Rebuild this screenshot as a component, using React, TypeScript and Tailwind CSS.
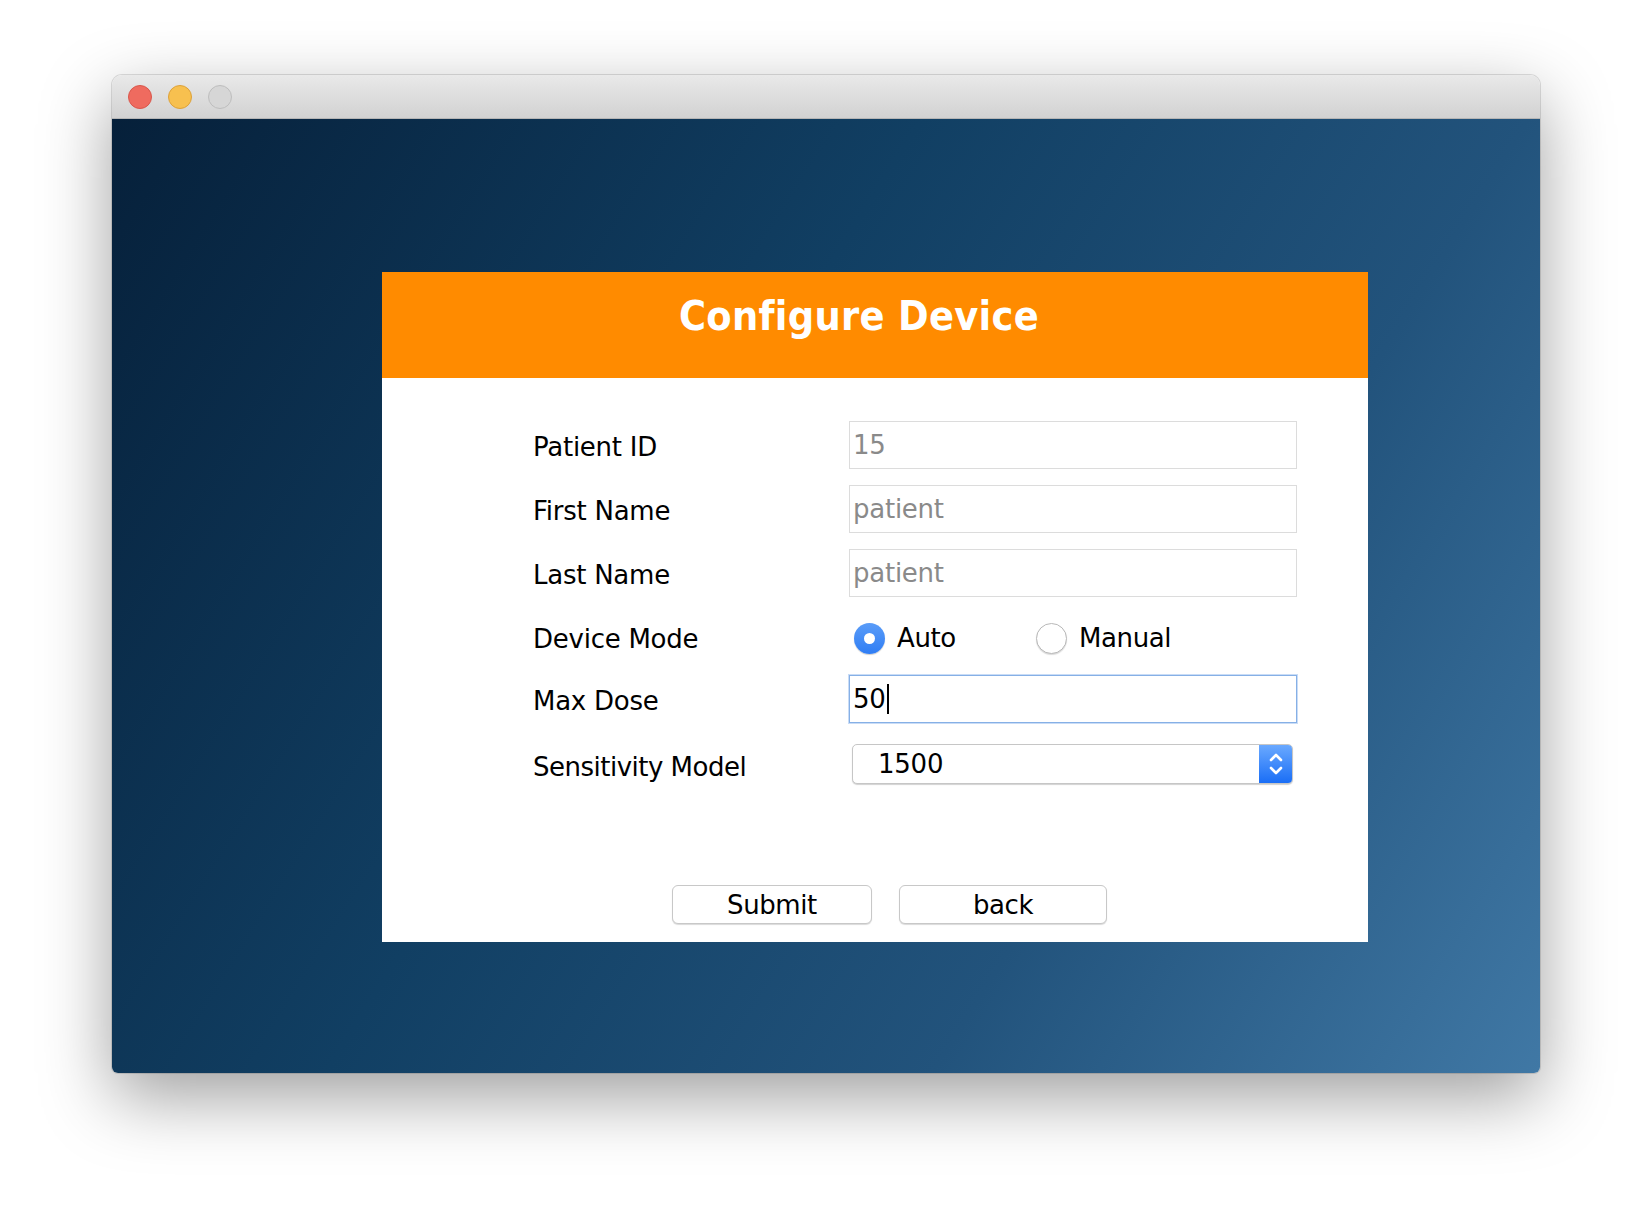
import React from "react";

const font = "font-['DejaVu_Sans',sans-serif]";

function TextRow({ label, value }: { label: string; value: string }) {
  return (
    <div className="flex h-[48px] items-center">
      <div className="w-[316px] pt-[4px] text-[26px] tracking-[-0.25px] text-black">{label}</div>
      <div className="flex h-[48px] w-[448px] items-center border border-[#dcdcdc] bg-white pl-[3px] text-[26px] tracking-[-0.25px] text-[#8a8a8a]">
        {value}
      </div>
    </div>
  );
}

function Radio({ checked, label }: { checked?: boolean; label: string }) {
  return (
    <div className="flex items-center">
      {checked ? (
        <span className="flex h-[31px] w-[31px] items-center justify-center rounded-full bg-[linear-gradient(#5a9cf8,#2f7df4)] shadow-[0_1px_1px_rgba(0,0,0,0.2)]">
          <span className="h-[11px] w-[11px] rounded-full bg-white" />
        </span>
      ) : (
        <span className="h-[31px] w-[31px] rounded-full border border-[#b9b9b9] bg-white shadow-[0_1px_1px_rgba(0,0,0,0.15)]" />
      )}
      <span className="ml-[12px] text-[26px] tracking-[-0.4px] text-black">{label}</span>
    </div>
  );
}

export default function App() {
  return (
    <div className={`relative h-[1222px] w-[1652px] overflow-hidden bg-white pl-[112px] pt-[75px] ${font}`}>
      {/* window */}
      <div className="flex h-[998px] w-[1428px] flex-col overflow-hidden rounded-t-[10px] rounded-b-[6px] shadow-[0_24px_70px_rgba(0,0,0,0.38),0_0_0_1px_rgba(0,0,0,0.12)]">
        {/* title bar */}
        <div className="flex h-[44px] shrink-0 items-center gap-[16px] border-b border-[#b5b5b5] bg-[linear-gradient(#e9e9e9,#d2d2d2)] pl-[16px]">
          <span className="h-[24px] w-[24px] rounded-full border border-[#d8574c] bg-[#ef6b5f]" />
          <span className="h-[24px] w-[24px] rounded-full border border-[#dca13a] bg-[#f7c04f]" />
          <span className="h-[24px] w-[24px] rounded-full border border-[#bdbdbd] bg-[#d6d6d6]" />
        </div>

        {/* content */}
        <div className="flex-1 bg-[linear-gradient(122deg,#06203a_0%,#113f63_40%,#22537c_70%,#4078a5_100%)] pl-[270px] pt-[153px]">
          <div className="flex h-[670px] w-[986px] flex-col bg-white">
            {/* header */}
            <div className="flex h-[106px] shrink-0 items-center justify-center bg-[#ff8b00] pb-[16px] pr-[32px]">
              <h1 className="font-['DejaVu_Sans_Condensed','DejaVu_Sans',sans-serif] text-[41px] font-bold tracking-[0.3px] text-white font-stretch-condensed">
                Configure Device
              </h1>
            </div>

            {/* form */}
            <div className="flex flex-col pl-[151px] pt-[43px]">
              <div className="flex flex-col gap-[16px]">
                <TextRow label="Patient ID" value="15" />
                <TextRow label="First Name" value="patient" />
                <TextRow label="Last Name" value="patient" />
                <div className="flex h-[48px] items-center">
                  <div className="w-[316px] pt-[4px] text-[26px] tracking-[-0.25px] text-black">Device Mode</div>
                  <div className="flex w-[448px] items-center pl-[5px] pt-[2px]">
                    <div className="w-[182px]">
                      <Radio checked label="Auto" />
                    </div>
                    <Radio label="Manual" />
                  </div>
                </div>
              </div>

              <div className="mt-[14px] flex h-[48px] items-center">
                <div className="w-[316px] pt-[4px] text-[26px] tracking-[-0.25px] text-black">Max Dose</div>
                <div className="flex h-[48px] w-[448px] items-center border border-[#86b0e6] bg-white pl-[3px] text-[26px] tracking-[-0.25px] text-black shadow-[0_0_0_1px_#c9dcf6]">
                  50
                  <span className="ml-[1px] h-[30px] w-[2px] bg-black" />
                </div>
              </div>

              <div className="mt-[21px] flex h-[40px] items-center">
                <div className="w-[316px] pt-[6px] text-[26px] tracking-[-0.5px] text-black">Sensitivity Model</div>
                <div className="ml-[3px] flex h-[40px] w-[441px] items-stretch overflow-hidden rounded-[5px] border border-[#c6c6c6] bg-white shadow-[0_1px_1px_rgba(0,0,0,0.18)]">
                  <div className="flex flex-1 items-center pl-[25px] text-[26px] tracking-[-0.25px] text-black">1500</div>
                  <div className="flex w-[33px] items-center justify-center bg-[linear-gradient(#6aa9ff,#1a6ef6)]">
                    <svg width="16" height="26" viewBox="0 0 16 26" fill="none" stroke="white" strokeWidth="2.6" strokeLinecap="round" strokeLinejoin="round">
                      <path d="M3 9 L8 4 L13 9" />
                      <path d="M3 17 L8 22 L13 17" />
                    </svg>
                  </div>
                </div>
              </div>

              {/* buttons */}
              <div className="ml-[139px] mt-[101px] flex gap-[27px]">
                <button className="h-[39px] w-[200px] rounded-[6px] border border-[#c8c8c8] bg-white text-[26px] leading-none tracking-[-0.4px] text-black shadow-[0_1px_1px_rgba(0,0,0,0.15)]">
                  Submit
                </button>
                <button className="h-[39px] w-[208px] rounded-[6px] border border-[#c8c8c8] bg-white text-[26px] leading-none tracking-[-0.4px] text-black shadow-[0_1px_1px_rgba(0,0,0,0.15)]">
                  back
                </button>
              </div>
            </div>
          </div>
        </div>
      </div>
    </div>
  );
}
